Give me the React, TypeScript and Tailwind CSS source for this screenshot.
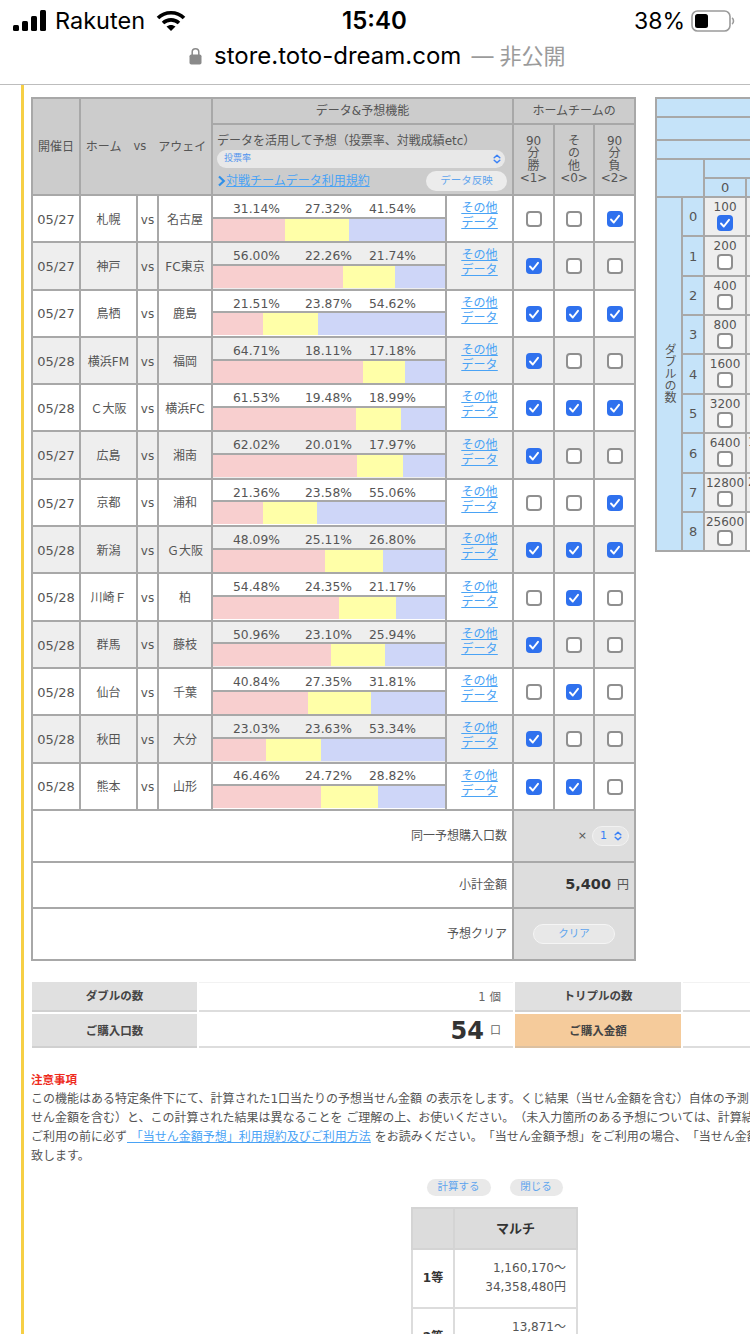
const rows = [
  { date: '05/27', home: '札幌', away: '名古屋', pct: [31.14, 27.32, 41.54], picks: [0, 0, 1] },
  { date: '05/27', home: '神戸', away: 'FC東京', pct: [56.0, 22.26, 21.74], picks: [1, 0, 0] },
  { date: '05/27', home: '鳥栖', away: '鹿島', pct: [21.51, 23.87, 54.62], picks: [1, 1, 1] },
  { date: '05/28', home: '横浜FM', away: '福岡', pct: [64.71, 18.11, 17.18], picks: [1, 0, 0] },
  { date: '05/28', home: 'Ｃ大阪', away: '横浜FC', pct: [61.53, 19.48, 18.99], picks: [1, 1, 1] },
  { date: '05/27', home: '広島', away: '湘南', pct: [62.02, 20.01, 17.97], picks: [1, 0, 0] },
  { date: '05/27', home: '京都', away: '浦和', pct: [21.36, 23.58, 55.06], picks: [0, 0, 1] },
  { date: '05/28', home: '新潟', away: 'Ｇ大阪', pct: [48.09, 25.11, 26.8], picks: [1, 1, 1] },
  { date: '05/28', home: '川崎Ｆ', away: '柏', pct: [54.48, 24.35, 21.17], picks: [0, 1, 0] },
  { date: '05/28', home: '群馬', away: '藤枝', pct: [50.96, 23.1, 25.94], picks: [1, 0, 0] },
  { date: '05/28', home: '仙台', away: '千葉', pct: [40.84, 27.35, 31.81], picks: [0, 1, 0] },
  { date: '05/28', home: '秋田', away: '大分', pct: [23.03, 23.63, 53.34], picks: [1, 0, 0] },
  { date: '05/28', home: '熊本', away: '山形', pct: [46.46, 24.72, 28.82], picks: [1, 1, 0] },
]

const doubles = [
  { n: 0, v: '100', next: '', h: 'h-[39px]' },
  { n: 1, v: '200', next: '', h: 'h-[40px]' },
  { n: 2, v: '400', next: '', h: 'h-[39px]' },
  { n: 3, v: '800', next: '', h: 'h-[39px]' },
  { n: 4, v: '1600', next: '', h: 'h-[40px]' },
  { n: 5, v: '3200', next: '', h: 'h-[39px]' },
  { n: 6, v: '6400', next: '12800', h: 'h-[40px]' },
  { n: 7, v: '12800', next: '25600', h: 'h-[39px]' },
  { n: 8, v: '25600', next: '', h: 'h-[39px]' },
]

const line = 'border-2 border-[#a8a8a8]'

const Checkbox = ({ checked }: { checked?: boolean }) =>
  checked ? (
    <span className="inline-flex w-[16px] h-[16px] rounded-[4px] bg-[#2f71ee] items-center justify-center align-middle">
      <svg width="12" height="12" viewBox="0 0 12 12" fill="none">
        <path d="M2 6.5 L4.8 9.5 L10 2.8" stroke="#fff" strokeWidth="1.9" strokeLinecap="round" strokeLinejoin="round" />
      </svg>
    </span>
  ) : (
    <span className="inline-block w-[16px] h-[16px] rounded-[4px] border-2 border-[#8f8f8f] bg-white align-middle" />
  )

const UpDown = () => (
  <svg width="8" height="10" viewBox="0 0 8 10" fill="none">
    <path d="M1.2 3.8 L4 1.2 L6.8 3.8 M1.2 6.2 L4 8.8 L6.8 6.2" stroke="#3b82f6" strokeWidth="1.5" strokeLinecap="round" strokeLinejoin="round" />
  </svg>
)

const StatusBar = () => (
  <div className="h-[85px] border-b border-[#bdbdbd] font-['Inter','Noto_Sans_CJK_JP',sans-serif] text-black">
    <div className="relative h-[42px] flex items-center pl-[13px] pr-[15px]">
      <svg width="34" height="22" viewBox="0 0 34 22" fill="#000">
        <rect x="0" y="15" width="6" height="6" rx="1.5" />
        <rect x="9" y="11" width="6" height="10" rx="1.5" />
        <rect x="18" y="6" width="6" height="15" rx="1.5" />
        <rect x="27" y="0" width="6" height="21" rx="1.5" />
      </svg>
      <span className="ml-[8px] text-[23.5px] leading-none">Rakuten</span>
      <svg className="ml-[11px]" width="30" height="22" viewBox="0 0 30 22" fill="none">
        <path d="M2 8 C9 1 21 1 28 8" stroke="#000" strokeWidth="3.6" />
        <path d="M7 13 C11.5 8.8 18.5 8.8 23 13" stroke="#000" strokeWidth="3.6" />
        <path d="M15 21 L10.5 16.5 C13 14.4 17 14.4 19.5 16.5 Z" fill="#000" />
      </svg>
      <span className="absolute left-[342px] text-[24px] leading-none font-semibold">15:40</span>
      <span className="ml-auto text-[23px] leading-none">38%</span>
      <svg className="ml-[6px]" width="44" height="22" viewBox="0 0 44 22" fill="none">
        <rect x="1" y="1" width="38" height="20" rx="5.5" stroke="#9b9b9b" strokeWidth="1.6" />
        <rect x="4" y="4" width="13" height="14" rx="2.5" fill="#000" />
        <path d="M41 8 C43 9 43 13 41 14" stroke="#9b9b9b" strokeWidth="1.6" />
      </svg>
    </div>
    <div className="flex items-center justify-start h-[28px] pl-[189px]">
      <svg width="13" height="18" viewBox="0 0 13 18" fill="none">
        <path d="M3.2 8 V5 a3.3 3.3 0 0 1 6.6 0 V8" stroke="#8a8a8a" strokeWidth="1.5" />
        <rect x="0.5" y="7.5" width="12" height="10" rx="1.8" fill="#8a8a8a" />
      </svg>
      <span className="ml-[12px] text-[24px] leading-none">store.toto-dream.com</span>
      <span className="ml-[10px] text-[22px] leading-none text-[#9b9b9b]">— 非公開</span>
    </div>
  </div>
)

const MainTable = () => (
  <table className="table-fixed border-collapse w-[603px] shrink-0 text-[#555] text-[12px]">
    <colgroup>
      <col className="w-[48px]" />
      <col className="w-[57px]" />
      <col className="w-[21px]" />
      <col className="w-[54px]" />
      <col className="w-[234px]" />
      <col className="w-[67px]" />
      <col className="w-[41px]" />
      <col className="w-[40px]" />
      <col className="w-[41px]" />
    </colgroup>
    <thead>
      <tr className="h-[26px] bg-[#cccccc]">
        <th rowSpan={2} className={`${line} font-normal`}>開催日</th>
        <th rowSpan={2} colSpan={3} className={`${line} font-normal`}>
          <div className="flex justify-center gap-[12px] whitespace-nowrap">
            <span>ホーム</span>
            <span className="text-[11.5px]">vs</span>
            <span>アウェイ</span>
          </div>
        </th>
        <th colSpan={2} className={`${line} font-normal`}>データ&amp;予想機能</th>
        <th colSpan={3} className={`${line} font-normal`}>ホームチームの</th>
      </tr>
      <tr className="h-[71px] bg-[#cccccc]">
        <th colSpan={2} className={`${line} font-normal p-0 text-left align-top`}>
          <div className="pl-[4px] pr-[5px] pt-[8px]">
            <div className="leading-[17px] whitespace-nowrap">データを活用して予想（投票率、対戦成績etc）</div>
            <div className="h-[18px] rounded-full bg-[#e8e8e8] flex items-center justify-between pl-[7px] pr-[4px] mr-[2px]">
              <span className="text-[9px] text-[#4f93ee]">投票率</span>
              <UpDown />
            </div>
            <div className="flex items-center justify-between mt-[3px]">
              <div className="flex items-center">
                <svg width="9" height="12" viewBox="0 0 9 12" fill="none">
                  <path d="M2 1.5 L6.8 6 L2 10.5" stroke="#2f8fe8" strokeWidth="2.2" />
                </svg>
                <a className="text-[12px] text-[#4aa3f5] underline whitespace-nowrap">対戦チームデータ利用規約</a>
              </div>
              <span className="w-[81px] h-[20px] rounded-full bg-[#ececec] flex items-center justify-center text-[10.5px] text-[#5fa5ee]">データ反映</span>
            </div>
          </div>
        </th>
        {[['90', '分', '勝', '<1>'], ['そ', 'の', '他', '<0>'], ['90', '分', '負', '<2>']].map((c, i) => (
          <th key={i} className={`${line} font-normal leading-[12.5px] p-0`}>
            {c.map((t, j) => (
              <div key={j}>{t}</div>
            ))}
          </th>
        ))}
      </tr>
    </thead>
    <tbody>
      {rows.map((r, i) => (
        <tr key={i} className={`h-[47.3px] ${i % 2 ? 'bg-[#eeeeee]' : 'bg-white'}`}>
          <td className={`${line} text-center text-[13px] p-0 pt-[2px]`}>{r.date}</td>
          <td className={`${line} text-center text-[12px] p-0 pt-[2px] whitespace-nowrap`}>{r.home}</td>
          <td className={`${line} text-center text-[12px] p-0 pt-[2px]`}>vs</td>
          <td className={`${line} text-center text-[12px] p-0 pt-[2px] whitespace-nowrap`}>{r.away}</td>
          <td className={`${line} p-0`}>
            <div className="h-[22px] flex items-center pl-[20px] pt-[5px] border-b-2 border-[#a8a8a8] text-[12.3px] whitespace-nowrap">
              <span className="w-[72px]">{r.pct[0].toFixed(2)}%</span>
              <span className="w-[64px]">{r.pct[1].toFixed(2)}%</span>
              <span>{r.pct[2].toFixed(2)}%</span>
            </div>
            <div className="h-[22px] flex">
              <div className="bg-[#f8cfcf]" style={{ width: `${r.pct[0]}%` }} />
              <div className="bg-[#ffffa8]" style={{ width: `${r.pct[1]}%` }} />
              <div className="bg-[#ced6f8]" style={{ width: `${r.pct[2]}%` }} />
            </div>
          </td>
          <td className={`${line} text-center p-0 pb-[5px] text-[12px] leading-[15px] text-[#4aa3f5] underline`}>
            <a className="block">その他</a>
            <a className="block">データ</a>
          </td>
          {r.picks.map((p, j) => (
            <td key={j} className={`${line} text-center p-0`}>
              <Checkbox checked={p === 1} />
            </td>
          ))}
        </tr>
      ))}
      <tr className="h-[52px]">
        <td colSpan={6} className={`${line} text-right pr-[5px]`}>同一予想購入口数</td>
        <td colSpan={3} className={`${line} bg-[#dddddd]`}>
          <div className="flex items-center justify-end pr-[5px]">
            <span className="mr-[5px] text-[11px]">×</span>
            <span className="w-[37px] h-[20px] rounded-full bg-[#e6e6e6] border border-[#f2f2f2] flex items-center justify-between pl-[7px] pr-[6px] text-[11px] text-[#3b82f6]">
              1
              <UpDown />
            </span>
          </div>
        </td>
      </tr>
      <tr className="h-[46px]">
        <td colSpan={6} className={`${line} text-right pr-[5px]`}>小計金額</td>
        <td colSpan={3} className={`${line} bg-[#dddddd] text-right pr-[5px]`}>
          <span className="text-[14.5px] font-bold text-[#333]">5,400</span>
          <span className="ml-[6px]">円</span>
        </td>
      </tr>
      <tr className="h-[52px]">
        <td colSpan={6} className={`${line} text-right pr-[5px]`}>予想クリア</td>
        <td colSpan={3} className={`${line} bg-[#dddddd]`}>
          <div className="w-[82px] h-[20px] ml-[19px] rounded-full bg-[#e8e8e8] border border-[#f5f5f5] flex items-center justify-center text-[10.5px] text-[#5fa5ee]">クリア</div>
        </td>
      </tr>
    </tbody>
  </table>
)

const DoublesTable = () => (
  <table className="table-fixed border-collapse w-[132px] shrink-0 text-[#555] text-[13px] leading-none ml-[19px]">
    <colgroup>
      <col className="w-[26px]" />
      <col className="w-[22px]" />
      <col className="w-[42px]" />
      <col className="w-[42px]" />
    </colgroup>
    <tbody>
      <tr className="h-[19px] bg-[#c5e3f9]"><td colSpan={4} className={line} /></tr>
      <tr className="h-[23px] bg-[#c5e3f9]"><td colSpan={4} className={line} /></tr>
      <tr className="h-[19px] bg-[#c5e3f9]"><td colSpan={4} className={line} /></tr>
      <tr className="h-[19px] bg-[#c5e3f9]">
        <td colSpan={2} rowSpan={2} className={line} />
        <td colSpan={2} className={line} />
      </tr>
      <tr className="h-[19px] bg-[#c5e3f9] text-center">
        <td className={line}>0</td>
        <td className={line} />
      </tr>
      {doubles.map((d, i) => (
        <tr key={d.n} className={d.h}>
          {i === 0 && (
            <td rowSpan={9} className={`${line} bg-[#c5e3f9] text-center text-[12px]`}>
              <span className="inline-block [writing-mode:vertical-rl] leading-none">ダブルの数</span>
            </td>
          )}
          <td className={`${line} bg-[#c5e3f9] text-center`}>{d.n}</td>
          <td className={`${line} bg-[#eeeeee] text-center text-[12px] p-0 leading-[15px] whitespace-nowrap`}>
            <div className="-mt-[2px]">{d.v}</div>
            <div className="h-[17px]"><Checkbox checked={i === 0} /></div>
          </td>
          <td className={`${line} text-center text-[12px] p-0 leading-[15px] whitespace-nowrap align-top ${d.n === 8 ? 'bg-white' : 'bg-[#eeeeee]'}`}>
            <div className="pt-[1px]">{d.next}</div>
          </td>
        </tr>
      ))}
    </tbody>
  </table>
)

const Summary = () => (
  <div className="mt-[21px] ml-[1px] w-[760px] text-[#444] text-[11.5px]">
    <div className="flex h-[30px] gap-[2px]">
      <div className="w-[165px] pt-[2px] bg-[#e0e0e0] flex items-center justify-center font-bold border-b-2 border-[#d0d0d0]">ダブルの数</div>
      <div className="w-[314px] pt-[2px] border-t border-b-2 border-t-[#f2f2f2] border-b-[#dddddd] flex items-center justify-end pr-[12px] text-[#666]">
        <span className="mr-[4px]">1</span>個
      </div>
      <div className="w-[166px] pt-[2px] bg-[#e0e0e0] flex items-center justify-center font-bold border-b-2 border-[#d0d0d0]">トリプルの数</div>
      <div className="flex-1 border-t border-b-2 border-t-[#f2f2f2] border-b-[#dddddd]" />
    </div>
    <div className="flex h-[34px] gap-[2px] mt-[2px]">
      <div className="w-[165px] pt-[3px] bg-[#e0e0e0] flex items-center justify-center font-bold border-b-2 border-[#d0d0d0]">ご購入口数</div>
      <div className="w-[314px] pt-[3px] border-b-2 border-[#dddddd] flex items-center justify-end pr-[12px]">
        <span className="text-[24px] font-bold text-[#333] leading-none">54</span>
        <span className="ml-[6px] text-[11px] text-[#666]">口</span>
      </div>
      <div className="w-[166px] pt-[3px] bg-[#f5cb9b] flex items-center justify-center font-bold border-b-2 border-[#dcc0a0]">ご購入金額</div>
      <div className="flex-1 border-b-2 border-[#dddddd]" />
    </div>
  </div>
)

const Notes = () => (
  <div className="mt-[23px] w-[719px] text-[12px] leading-[19px] text-[#555] whitespace-nowrap overflow-hidden">
    <div className="font-bold text-[11.5px] text-[#ee2b1c]">注意事項</div>
    <div>この機能はある特定条件下にて、計算された1口当たりの予想当せん金額 の表示をします。くじ結果（当せん金額を含む）自体の予測</div>
    <div>せん金額を含む）と、この計算された結果は異なることを ご理解の上、お使いください。（未入力箇所のある予想については、計算結</div>
    <div>
      ご利用の前に必ず
      <a className="text-[#4aa3f5] underline">&nbsp;「当せん金額予想」利用規約及びご利用方法</a>
      &nbsp;をお読みください。「当せん金額予想」をご利用の場合、「当せん金額
    </div>
    <div>致します。</div>
  </div>
)

const Prizes = () => (
  <div className="w-[927px] mt-[13px] flex flex-col items-center text-[#555]">
    <div className="flex gap-[19px]">
      <span className="w-[64px] h-[17px] rounded-full bg-[#e9e9e9] flex items-center justify-center text-[10.5px] text-[#5fa5ee]">計算する</span>
      <span className="w-[53px] h-[17px] rounded-full bg-[#e9e9e9] flex items-center justify-center text-[10.5px] text-[#5fa5ee]">閉じる</span>
    </div>
    <table className="table-fixed border-collapse w-[165px] mt-[11px] text-[12px]">
      <colgroup>
        <col className="w-[42px]" />
        <col className="w-[123px]" />
      </colgroup>
      <tbody>
        <tr className="h-[41px] bg-[#dcdcdc]">
          <th className="border-2 border-[#d4d4d4]" />
          <th className="border-2 border-[#d4d4d4] font-bold text-[13px] text-[#333]">マルチ</th>
        </tr>
        <tr className="h-[59px]">
          <th className="border-2 border-[#dcdcdc] font-bold text-[#333]">1等</th>
          <td className="border-2 border-[#dcdcdc] text-right pr-[10px] leading-[19px] whitespace-nowrap">
            1,160,170～<br />34,358,480円
          </td>
        </tr>
        <tr className="h-[59px]">
          <th className="border-2 border-[#dcdcdc] font-bold text-[#333]">2等</th>
          <td className="border-2 border-[#dcdcdc] text-right pr-[10px] leading-[19px] whitespace-nowrap">
            13,871～<br />410,760円
          </td>
        </tr>
      </tbody>
    </table>
  </div>
)

export default function App() {
  return (
    <div className="w-[750px] h-[1334px] overflow-hidden bg-white font-['DejaVu_Sans','Noto_Sans_CJK_JP',sans-serif] [text-spacing-trim:space-all]">
      <StatusBar />
      <div className="ml-[21px] h-[1249px] border-l-[3px] border-[#f6cf45] pl-[7px] pt-[12px] overflow-hidden">
        <div className="flex items-start w-[800px]">
          <MainTable />
          <DoublesTable />
        </div>
        <Summary />
        <Notes />
        <Prizes />
      </div>
    </div>
  )
}
